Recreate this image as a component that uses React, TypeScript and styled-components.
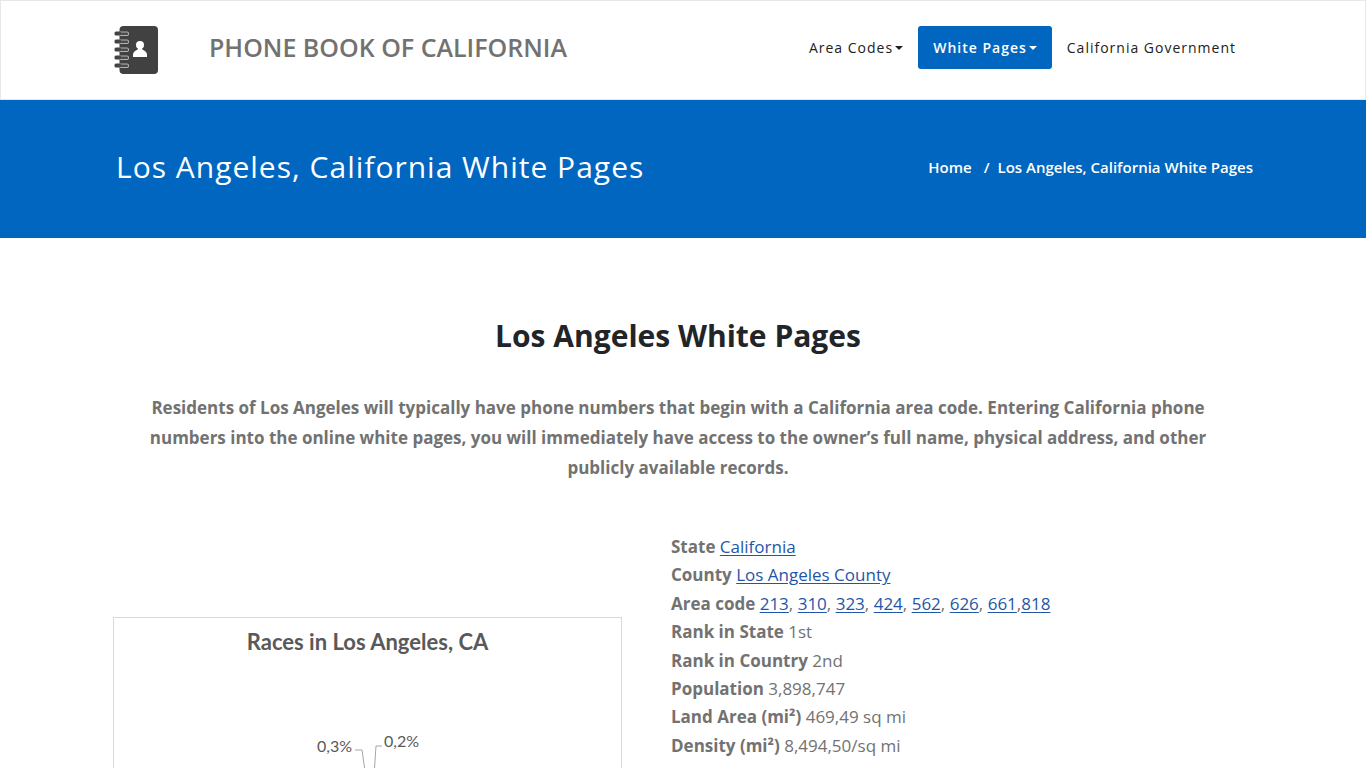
import React from "react";
import styled, { createGlobalStyle } from "styled-components";

const GlobalStyle = createGlobalStyle`
  *, *::before, *::after { box-sizing: border-box; }
  body {
    margin: 0;
    background: #fff;
    color: #727272;
    font-family: "Open Sans", sans-serif;
    font-size: 17px;
  }
  h1, h2, p, ul, ol { margin: 0; padding: 0; }
  ul, ol { list-style: none; }
`;

const BLUE = "#0066c0";

const Container = styled.div`
  width: 100%;
  max-width: 1170px;
  margin: 0 auto;
  padding: 0 15px;
`;

const Header = styled.header`
  border: 1px solid #e7e7e7;
`;

const HeaderRow = styled(Container)`
  display: flex;
  align-items: center;
  justify-content: space-between;
  min-height: 98px;
`;

const Brand = styled.a`
  display: flex;
  align-items: center;
  gap: 50px;
  color: #727272;
  font-size: 25px;
  font-weight: 600;
  line-height: 34px;
  text-decoration: none;
`;

const BrandName = styled.span`
  padding-bottom: 6px;
`;

const Nav = styled.nav`
  display: flex;
  padding: 0 2px 6px 0;
`;

const NavLink = styled.a<{ $active?: boolean }>`
  display: flex;
  align-items: center;
  gap: 2px;
  height: 43px;
  padding: 0 15px;
  border-radius: 3px;
  background: ${(p) => (p.$active ? BLUE : "transparent")};
  color: ${(p) => (p.$active ? "#fff" : "#212121")};
  font-size: 14px;
  font-weight: ${(p) => (p.$active ? 600 : 400)};
  letter-spacing: 1px;
  text-decoration: none;
`;

const Caret = styled.span`
  border: 4px solid transparent;
  border-top-color: currentColor;
  border-bottom: 0;
  margin-top: 2px;
`;

const Banner = styled.section`
  background: ${BLUE};
  color: #fff;
`;

const BannerRow = styled(Container)`
  display: flex;
  align-items: center;
  justify-content: space-between;
  min-height: 138px;
  padding-bottom: 5px;
`;

const BannerTitle = styled.h1`
  padding-left: 3px;
  font-size: 30px;
  font-weight: 400;
  letter-spacing: 1px;
  line-height: 42px;
`;

const Crumbs = styled.ol`
  display: flex;
  font-size: 15px;
  font-weight: 600;
  line-height: 22px;
`;

const Crumb = styled.li`
  & + &::before {
    content: "/";
    padding: 0 8px 0 12px;
  }
`;

const CrumbLink = styled.a`
  color: inherit;
  text-decoration: none;
`;

const Main = styled(Container)`
  padding-top: 76px;
`;

const Intro = styled.section`
  padding: 0 40px 0 30px;
  text-align: center;
`;

const Heading = styled.h2`
  color: #212529;
  font-size: 30px;
  font-weight: 700;
  line-height: 44px;
`;

const Lead = styled.p`
  margin-top: 35px;
  font-weight: 700;
  line-height: 30px;
`;

const Columns = styled.div`
  display: grid;
  grid-template-columns: 509fr 582fr;
  gap: 49px;
  margin-top: 50px;
`;

const ChartFigure = styled.figure`
  margin: 84px 0 0;
  border: 1px solid #d9d9d9;
  color: #595959;
  font-family: Lato, sans-serif;
  text-align: center;
`;

const ChartTitle = styled.figcaption`
  padding-top: 9px;
  font-size: 22px;
  font-weight: 700;
  line-height: 30px;
`;

const ChartSvg = styled.svg`
  display: block;
  width: 100%;
  font-size: 16px;
  fill: #595959;
`;

const Facts = styled.ul`
  line-height: 1.67;
`;

const Link = styled.a`
  color: #1f56a8;
  text-underline-offset: 2px;
`;

function BookLogo() {
  const rings = [8, 16, 24, 32, 40];
  return (
    <svg width="46" height="50" viewBox="0 0 46 50" aria-hidden="true">
      <rect x="6.500" y="1" width="38.500" height="48" rx="4" fill="#414141" />
      {rings.map((y) => (
        <g key={y}>
          <rect x="5" y={y - 1.5} width="11" height="4.500" rx="2" fill="#b4b4b4" />
          <rect x="1.500" y={y - 1.5} width="6.500" height="4" rx="1.500" fill="#414141" />
          <rect x="5" y={y - 0.5} width="10" height="2.500" rx="1" fill="#4a4a4a" />
        </g>
      ))}
      <circle cx="27" cy="20" r="4" fill="#fff" />
      <path d="M20 32v-2q0-3 3-4.500 2-.7 2.500-3h3q.5 2.300 2.500 3 3 1.500 3 4.500v2z" fill="#fff" />
    </svg>
  );
}

function RacesChart() {
  return (
    <ChartFigure>
      <ChartTitle>Races in Los Angeles, CA</ChartTitle>
      <ChartSvg viewBox="0 0 507 380" role="img" aria-label="Pie chart of races">
        <text x="203" y="95">0,3%</text>
        <text x="270" y="90">0,2%</text>
        <path d="M241 93h7l8 56M268 89h-6l-4 60" fill="none" stroke="#a6a6a6" />
        <circle cx="257" cy="249" r="100" fill="#4472c4" />
      </ChartSvg>
    </ChartFigure>
  );
}

const codes = ["213", "310", "323", "424", "562", "626", "661", "818"];

const facts: [string, React.ReactNode][] = [
  ["State", <Link href="#california">California</Link>],
  ["County", <Link href="#county">Los Angeles County</Link>],
  [
    "Area code",
    codes.map((code, i) => (
      <React.Fragment key={code}>
        {i > 0 && (i === codes.length - 1 ? "," : ", ")}
        <Link href={`#${code}`}>{code}</Link>
      </React.Fragment>
    )),
  ],
  ["Rank in State", "1st"],
  ["Rank in Country", "2nd"],
  ["Population", "3,898,747"],
  ["Land Area (mi²)", "469,49 sq mi"],
  ["Density (mi²)", "8,494,50/sq mi"],
];

export default function App() {
  return (
    <>
      <GlobalStyle />
      <Header>
        <HeaderRow>
          <Brand href="#home">
            <BookLogo />
            <BrandName>PHONE BOOK OF CALIFORNIA</BrandName>
          </Brand>
          <Nav aria-label="Main">
            <NavLink href="#area-codes">Area Codes<Caret /></NavLink>
            <NavLink href="#white-pages" $active>White Pages<Caret /></NavLink>
            <NavLink href="#government">California Government</NavLink>
          </Nav>
        </HeaderRow>
      </Header>
      <Banner>
        <BannerRow>
          <BannerTitle>Los Angeles, California White Pages</BannerTitle>
          <Crumbs>
            <Crumb><CrumbLink href="#home">Home</CrumbLink></Crumb>
            <Crumb>Los Angeles, California White Pages</Crumb>
          </Crumbs>
        </BannerRow>
      </Banner>
      <Main as="main">
        <Intro>
          <Heading>Los Angeles White Pages</Heading>
          <Lead>
            Residents of Los Angeles will typically have phone numbers that begin with a California
            area code. Entering California phone numbers into the online white pages, you will
            immediately have access to the owner’s full name, physical address, and other publicly
            available records.
          </Lead>
        </Intro>
        <Columns>
          <RacesChart />
          <Facts>
            {facts.map(([label, value]) => (
              <li key={label}>
                <strong>{label}</strong> {value}
              </li>
            ))}
          </Facts>
        </Columns>
      </Main>
    </>
  );
}
